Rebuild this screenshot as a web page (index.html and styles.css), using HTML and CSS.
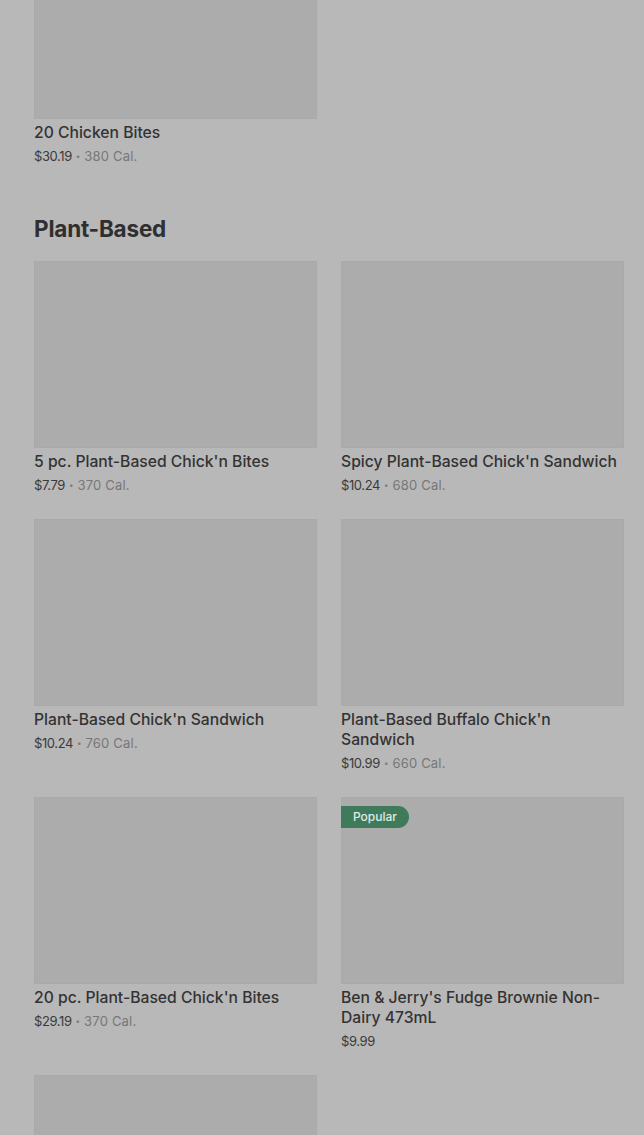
FILE: index.html
```html
<!DOCTYPE html>
<html lang="en">
<head>
<meta charset="utf-8">
<link rel="stylesheet" href="styles.css">
</head>
<body>
<main class="page">
  <section class="section">
    <div class="grid">
      <div class="card">
        <div class="thumb"></div>
        <div class="name">20 Chicken Bites</div>
        <div class="meta"><span class="price">$30.19</span><span class="dot">•</span><span class="cal">380 Cal.</span></div>
      </div>
    </div>
  </section>

  <section class="section">
    <h2 class="heading">Plant-Based</h2>
    <div class="grid">
      <div class="card">
        <div class="thumb"></div>
        <div class="name">5 pc. Plant-Based Chick'n Bites</div>
        <div class="meta"><span class="price">$7.79</span><span class="dot">•</span><span class="cal">370 Cal.</span></div>
      </div>
      <div class="card">
        <div class="thumb"></div>
        <div class="name">Spicy Plant-Based Chick'n Sandwich</div>
        <div class="meta"><span class="price">$10.24</span><span class="dot">•</span><span class="cal">680 Cal.</span></div>
      </div>
      <div class="card">
        <div class="thumb"></div>
        <div class="name">Plant-Based Chick'n Sandwich</div>
        <div class="meta"><span class="price">$10.24</span><span class="dot">•</span><span class="cal">760 Cal.</span></div>
      </div>
      <div class="card">
        <div class="thumb"></div>
        <div class="name">Plant-Based Buffalo Chick'n Sandwich</div>
        <div class="meta"><span class="price">$10.99</span><span class="dot">•</span><span class="cal">660 Cal.</span></div>
      </div>
      <div class="card">
        <div class="thumb"></div>
        <div class="name">20 pc. Plant-Based Chick'n Bites</div>
        <div class="meta"><span class="price">$29.19</span><span class="dot">•</span><span class="cal">370 Cal.</span></div>
      </div>
      <div class="card">
        <div class="thumb"><span class="badge">Popular</span></div>
        <div class="name">Ben &amp; Jerry's Fudge Brownie Non-Dairy 473mL</div>
        <div class="meta"><span class="price">$9.99</span></div>
      </div>
      <div class="card">
        <div class="thumb"></div>
      </div>
    </div>
  </section>
</main>
</body>
</html>
```

FILE: styles.css
```css
html, body {
  margin: 0;
  padding: 0;
  background: #b8b8b8;
  overflow: hidden;
}
body {
  font-family: "Inter", "Roboto", "Liberation Sans", sans-serif;
  color: #2f2f2f;
}
.page {
  margin-top: -68px;
  padding: 0 20px 0 34px;
}
.grid {
  display: grid;
  grid-template-columns: 283px 283px;
  column-gap: 24px;
  row-gap: 24px;
  align-items: start;
}
.section + .section {
  margin-top: 47px;
}
.heading {
  margin: 0 0 16px 0;
  font-size: 22.5px;
  line-height: 32px;
  font-weight: 700;
  color: #2f2f2f;
  letter-spacing: -0.2px;
}
.card {
  display: flex;
  flex-direction: column;
}
.thumb {
  position: relative;
  height: 187px;
  background: #acacac;
  box-shadow: inset 0 0 0 1px #a9a9a9;
}
.badge {
  position: absolute;
  left: 0;
  top: 9px;
  height: 22px;
  line-height: 22px;
  padding: 0 12px 0 12px;
  background: #3f7b5b;
  color: #e0ebe5;
  font-size: 12px;
  font-weight: 500;
  border-radius: 0 11px 11px 0;
}
.name {
  margin-top: 4px;
  font-size: 15.7px;
  line-height: 20px;
  font-weight: 500;
  color: #333333;
}
.meta {
  margin-top: 3px;
  font-size: 13px;
  line-height: 20px;
}
.price {
  color: #3a3a3a;
  letter-spacing: -0.4px;
}
.dot {
  color: #7a7a7a;
  font-size: 8px;
  margin: 0 4px;
  vertical-align: 2px;
}
.cal {
  color: #777777;
  letter-spacing: 0.2px;
}
```
